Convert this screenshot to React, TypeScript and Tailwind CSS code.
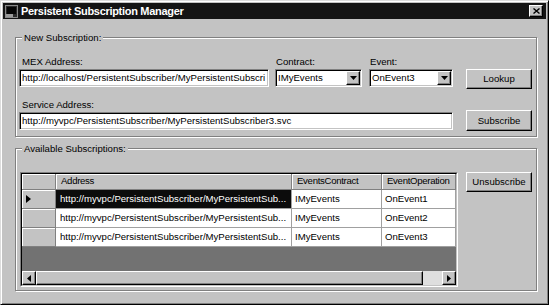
import React from 'react';

const rows = [
  { addr: 'http://myvpc/PersistentSubscriber/MyPersistentSub...', c: 'IMyEvents', op: 'OnEvent1', sel: true },
  { addr: 'http://myvpc/PersistentSubscriber/MyPersistentSub...', c: 'IMyEvents', op: 'OnEvent2', sel: false },
  { addr: 'http://myvpc/PersistentSubscriber/MyPersistentSub...', c: 'IMyEvents', op: 'OnEvent3', sel: false },
];

function DownArrow() {
  return (
    <svg width="7" height="4" viewBox="0 0 7 4">
      <path d="M0 0H7L3.5 4Z" fill="#000" />
    </svg>
  );
}

function Combo({ value }: { value: string }) {
  return (
    <div className="h-[18px] flex bg-white border border-t-[#808080] border-l-[#808080] border-b-white border-r-white shadow-[inset_1px_1px_0_#000,inset_-1px_-1px_0_#c3c3c3] p-[1px]">
      <div className="flex-1 min-w-0 pl-[1px] leading-[14px] overflow-hidden whitespace-nowrap">{value}</div>
      <div className="w-[14px] h-[14px] shrink-0 bg-[#c3c3c3] border border-t-white border-l-white border-b-black border-r-black shadow-[inset_-1px_-1px_0_#808080] flex items-center justify-center">
        <DownArrow />
      </div>
    </div>
  );
}

function TextBox({ value }: { value: string }) {
  return (
    <div className="h-[18px] bg-white border border-t-[#808080] border-l-[#808080] border-b-white border-r-white shadow-[inset_1px_1px_0_#000,inset_-1px_-1px_0_#c3c3c3] p-[1px] pl-[2px] leading-[14px] overflow-hidden whitespace-nowrap">
      {value}
    </div>
  );
}

export default function App() {
  return (
    <div className="w-[549px] h-[305px] bg-[#c3c3c3] border border-t-[#dcdcdc] border-l-[#dcdcdc] border-b-black border-r-black shadow-[inset_1px_1px_0_#fff,inset_-1px_-1px_0_#808080] p-[2px] flex flex-col font-['Liberation_Sans',Arial,sans-serif] text-[9.6px] text-black overflow-hidden">
      {/* Title bar */}
      <div className="h-[16px] shrink-0 bg-[#141414] flex items-center pl-[2px] pr-[3px]">
        <svg width="13" height="13" viewBox="0 0 13 13">
          <rect x="0.5" y="0.5" width="12" height="12" fill="#2a2a2a" stroke="#8a8a8a" />
          <rect x="2" y="2" width="9" height="7" fill="#050505" />
          <rect x="1" y="9" width="7" height="3" fill="#9a9a9a" />
        </svg>
        <span className="ml-[3px] text-white font-bold text-[11px] tracking-[-0.3px] leading-none">
          Persistent Subscription Manager
        </span>
        <div className="ml-auto w-[14px] h-[12px] bg-[#c3c3c3] border border-t-white border-l-white border-b-black border-r-black shadow-[inset_-1px_-1px_0_#808080] flex items-center justify-center">
          <svg width="7" height="6" viewBox="0 0 7 6">
            <path d="M0.5 0.5L6.5 5.5M6.5 0.5L0.5 5.5" stroke="#000" strokeWidth="1.4" />
          </svg>
        </div>
      </div>

      <div className="flex flex-col pl-[12px]">
        {/* New Subscription group */}
        <div className="mt-[18px] w-[522px] flex flex-col border border-[#808080] shadow-[inset_1px_1px_0_#fff,1px_1px_0_#fff] pb-[5px]">
          <div className="-mt-[7px] ml-[6px] px-[2px] self-start bg-[#c3c3c3] leading-[13px]">New Subscription:</div>
          <div className="mt-[11px] flex items-start pl-[3px]">
            <div className="w-[250px] flex flex-col">
              <div className="h-[14px] leading-[14px] pl-[3px]">MEX Address:</div>
              <TextBox value="http://localhost/PersistentSubscriber/MyPersistentSubscri" />
            </div>
            <div className="ml-[6px] w-[87px] flex flex-col">
              <div className="h-[14px] leading-[14px] pl-[1px]">Contract:</div>
              <Combo value="IMyEvents" />
            </div>
            <div className="ml-[7px] w-[84px] flex flex-col">
              <div className="h-[14px] leading-[14px] pl-[1px]">Event:</div>
              <Combo value="OnEvent3" />
            </div>
            <button className="ml-[13px] mt-[14px] w-[66px] h-[20px] bg-[#c3c3c3] border border-t-white border-l-white border-b-black border-r-black shadow-[inset_-1px_-1px_0_#808080] flex items-center justify-center leading-none">
              Lookup
            </button>
          </div>
          <div className="mt-[9px] flex items-start pl-[3px]">
            <div className="w-[434px] flex flex-col">
              <div className="h-[14px] leading-[14px] pl-[3px]">Service Address:</div>
              <TextBox value="http://myvpc/PersistentSubscriber/MyPersistentSubscriber3.svc" />
            </div>
            <button className="ml-[13px] mt-[12px] w-[66px] h-[21px] bg-[#c3c3c3] border border-t-white border-l-white border-b-black border-r-black shadow-[inset_-1px_-1px_0_#808080] flex items-center justify-center leading-none">
              Subscribe
            </button>
          </div>
        </div>

        {/* Available Subscriptions group */}
        <div className="mt-[11px] w-[522px] flex flex-col border border-[#808080] shadow-[inset_1px_1px_0_#fff,1px_1px_0_#fff] pb-[3px]">
          <div className="-mt-[7px] ml-[6px] px-[2px] self-start bg-[#c3c3c3] leading-[13px]">Available Subscriptions:</div>
          <div className="mt-[17px] flex items-start pl-[4px]">
            {/* Data grid */}
            <div className="w-[438px] h-[115px] border border-t-[#808080] border-l-[#808080] border-b-white border-r-white">
              <div className="w-full h-full border border-t-black border-l-black border-b-[#c3c3c3] border-r-[#c3c3c3] bg-[#727272] flex flex-col overflow-hidden">
                <div className="h-[16px] flex shrink-0">
                  <div className="w-[34px] bg-[#c3c3c3] border-r border-b border-[#808080] shadow-[inset_1px_1px_0_#fff]" />
                  <div className="w-[236px] bg-[#c3c3c3] border-r border-b border-[#808080] shadow-[inset_1px_1px_0_#fff] pl-[5px] flex items-center tracking-[-0.3px] whitespace-nowrap overflow-hidden">Address</div>
                  <div className="w-[90px] bg-[#c3c3c3] border-r border-b border-[#808080] shadow-[inset_1px_1px_0_#fff] pl-[5px] flex items-center tracking-[-0.3px] whitespace-nowrap overflow-hidden">EventsContract</div>
                  <div className="w-[74px] bg-[#c3c3c3] border-r border-b border-[#808080] shadow-[inset_1px_1px_0_#fff] pl-[5px] flex items-center tracking-[-0.3px] whitespace-nowrap overflow-hidden">EventOperation</div>
                </div>
                {rows.map((r, i) => (
                  <div key={i} className="h-[19px] flex shrink-0">
                    <div className="w-[34px] bg-[#c3c3c3] border-r border-b border-[#808080] shadow-[inset_1px_1px_0_#fff] flex items-center pl-[4px]">
                      {r.sel && (
                        <svg width="5" height="8" viewBox="0 0 5 8">
                          <path d="M0 0L5 4L0 8Z" fill="#000" />
                        </svg>
                      )}
                    </div>
                    <div className={r.sel ? 'w-[236px] bg-[#0c0c0c] text-white border-r border-b border-[#a0a0a0] pl-[4px] flex items-center whitespace-nowrap overflow-hidden' : 'w-[236px] bg-white border-r border-b border-[#a0a0a0] pl-[4px] flex items-center whitespace-nowrap overflow-hidden'}>
                      {r.addr}
                    </div>
                    <div className="w-[90px] bg-white border-r border-b border-[#a0a0a0] pl-[3px] flex items-center whitespace-nowrap overflow-hidden">{r.c}</div>
                    <div className="w-[74px] bg-white border-r border-b border-[#a0a0a0] pl-[3px] flex items-center whitespace-nowrap overflow-hidden">{r.op}</div>
                  </div>
                ))}
                <div className="flex-1" />
                <div className="h-[14px] flex shrink-0 bg-[#dedede]">
                  <div className="w-[14px] h-full bg-[#c3c3c3] border border-t-white border-l-white border-b-black border-r-black shadow-[inset_-1px_-1px_0_#808080] flex items-center justify-center">
                    <svg width="4" height="7" viewBox="0 0 4 7">
                      <path d="M4 0V7L0 3.5Z" fill="#000" />
                    </svg>
                  </div>
                  <div className="w-[387px] h-full bg-[#c3c3c3] border border-t-white border-l-white border-b-black border-r-black shadow-[inset_-1px_-1px_0_#808080]" />
                  <div className="flex-1" />
                  <div className="w-[14px] h-full bg-[#c3c3c3] border border-t-white border-l-white border-b-black border-r-black shadow-[inset_-1px_-1px_0_#808080] flex items-center justify-center">
                    <svg width="4" height="7" viewBox="0 0 4 7">
                      <path d="M0 0V7L4 3.5Z" fill="#000" />
                    </svg>
                  </div>
                </div>
              </div>
            </div>
            <button className="ml-[8px] w-[66px] h-[20px] bg-[#c3c3c3] border border-t-white border-l-white border-b-black border-r-black shadow-[inset_-1px_-1px_0_#808080] flex items-center justify-center leading-none">
              Unsubscribe
            </button>
          </div>
        </div>
      </div>
    </div>
  );
}
